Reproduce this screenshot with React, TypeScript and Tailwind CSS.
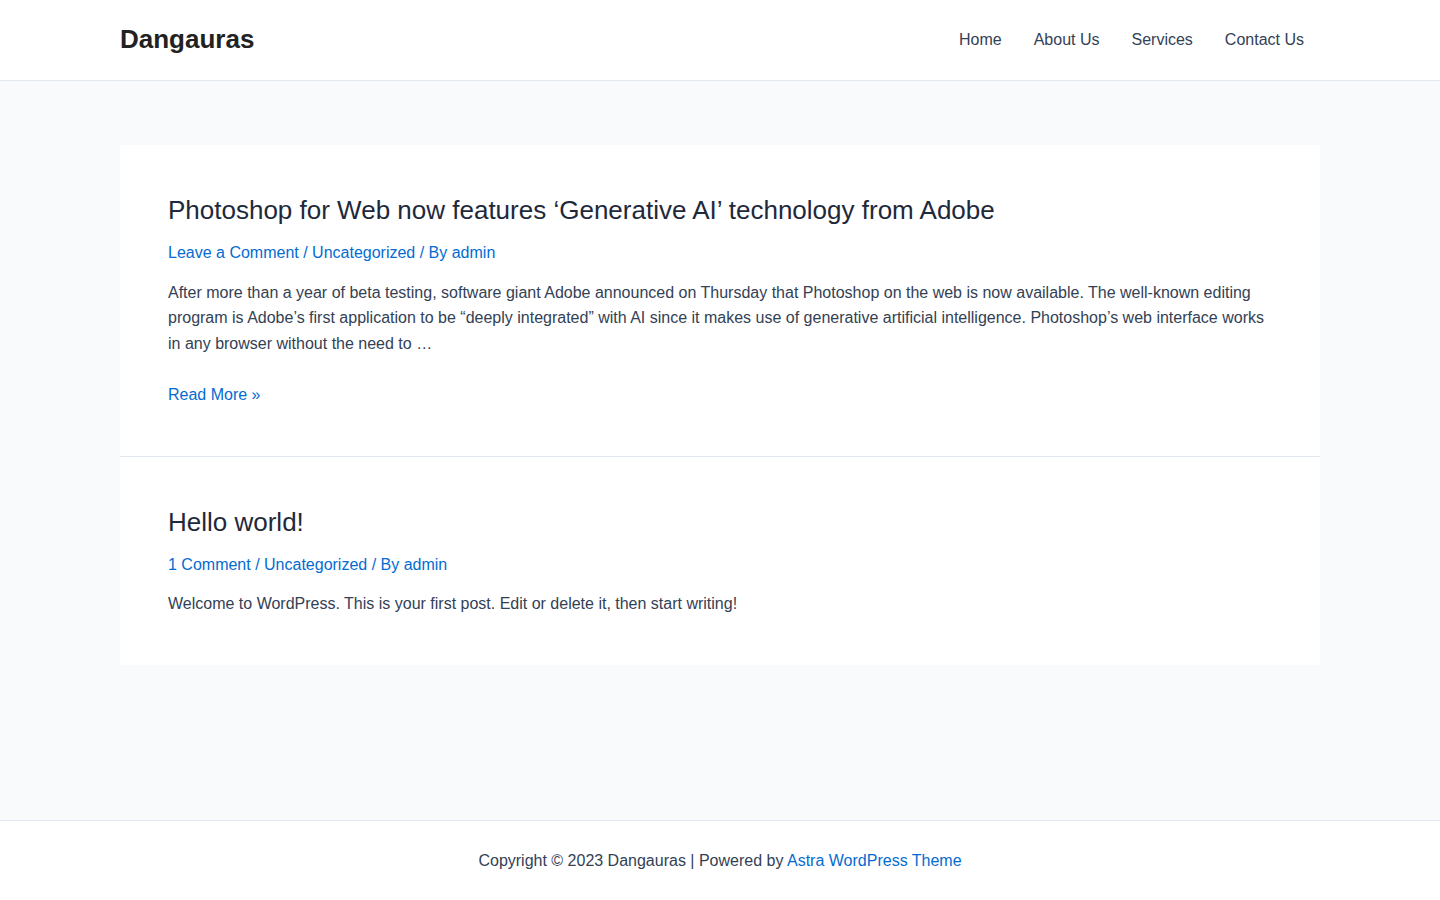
const posts = [
  {
    title: 'Photoshop for Web now features \u2018Generative AI\u2019 technology from Adobe',
    comments: 'Leave a Comment',
    excerpt:
      'After more than a year of beta testing, software giant Adobe announced on Thursday that Photoshop on the web is now available. The well-known editing program is Adobe\u2019s first application to be \u201cdeeply integrated\u201d with AI since it makes use of generative artificial intelligence. Photoshop\u2019s web interface works in any browser without the need to \u2026',
    readMore: true,
  },
  {
    title: 'Hello world!',
    comments: '1 Comment',
    excerpt: 'Welcome to WordPress. This is your first post. Edit or delete it, then start writing!',
    readMore: false,
  },
];

const navItems = ['Home', 'About Us', 'Services', 'Contact Us'];

export default function App() {
  return (
    <div className="min-h-screen flex flex-col bg-[#f9fafb] text-[#334155] font-['Liberation_Sans',Arial,sans-serif]">
      <header className="bg-white border-b border-[#e2e8f0]">
        <div className="mx-auto w-[1200px] h-[80px] flex items-center justify-between">
          <a href="#" className="text-[26px] font-bold text-[#222] leading-none -mt-[2px]">
            Dangauras
          </a>
          <nav className="flex">
            {navItems.map(item => (
              <a key={item} href="#" className="px-4 text-[16px] text-[#334155] leading-[80px]">
                {item}
              </a>
            ))}
          </nav>
        </div>
      </header>

      <main className="flex-1 pt-16 pb-[155px]">
        <div className="mx-auto w-[1200px] bg-white">
          {posts.map((post, i) => (
            <article
              key={post.title}
              className={`px-12 pt-12 pb-12 ${i < posts.length - 1 ? 'border-b border-[#e2e8f0]' : ''}`}
            >
              <h2 className="text-[26px] leading-[34px] text-[#1e293b]">
                <a href="#">{post.title}</a>
              </h2>
              <div className="mt-[13px] text-[16px] leading-[25.6px] text-[#046bd2]">
                <a href="#">{post.comments}</a> / <a href="#">Uncategorized</a> / By{' '}
                <a href="#">admin</a>
              </div>
              <p className="mt-[14px] text-[16px] leading-[25.6px] text-[#334155]">{post.excerpt}</p>
              {post.readMore && (
                <p className="mt-[25.6px] text-[16px] leading-[25.6px]">
                  <a href="#" className="text-[#046bd2]">
                    Read More »
                  </a>
                </p>
              )}
            </article>
          ))}
        </div>
      </main>

      <footer className="bg-white border-t border-[#e2e8f0] h-[80px] flex items-center justify-center text-[16px] leading-[25.6px] text-[#334155]">
        <p>
          Copyright © 2023 Dangauras | Powered by{' '}
          <a href="#" className="text-[#046bd2]">
            Astra WordPress Theme
          </a>
        </p>
      </footer>
    </div>
  );
}
